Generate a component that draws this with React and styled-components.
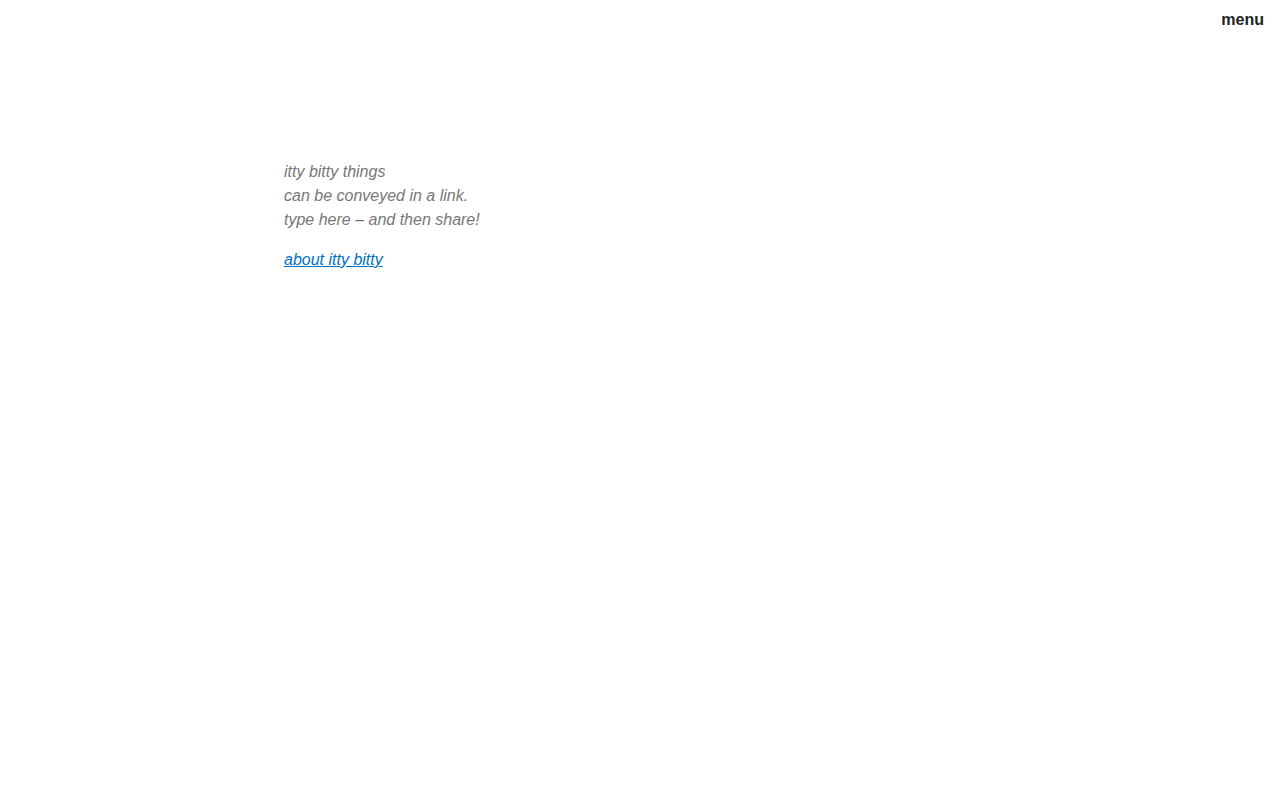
import React from "react";
import styled, { createGlobalStyle } from "styled-components";

const Global = createGlobalStyle`
  html, body { margin: 0; padding: 0; background: #fff; }
  body { font-family: "Liberation Sans", Arial, sans-serif; font-size: 16px; }
`;

const Page = styled.div`
  min-height: 800px;
  display: flex;
  flex-direction: column;
`;

const TopBar = styled.header`
  display: flex;
  justify-content: flex-end;
  padding: 8px 16px 0;
`;

const MenuButton = styled.button`
  border: none;
  background: none;
  padding: 0;
  font-family: "Liberation Sans", Arial, sans-serif;
  font-size: 16px;
  font-weight: bold;
  line-height: 24px;
  color: #222;
  cursor: pointer;
`;

const Content = styled.main`
  width: 712px;
  margin: 0 auto;
  padding-top: 128px;
`;

const Placeholder = styled.div`
  font-style: italic;
  color: #777;
  line-height: 24px;
  font-size: 16px;
`;

const Line = styled.div``;

const AboutLink = styled.a`
  display: inline-block;
  margin-top: 16px;
  font-style: italic;
  color: #0070c9;
  text-decoration: underline;
  line-height: 24px;
  font-size: 16px;
`;

export default function App() {
  return (
    <Page>
      <Global />
      <TopBar>
        <MenuButton>menu</MenuButton>
      </TopBar>
      <Content>
        <Placeholder>
          <Line>itty bitty things</Line>
          <Line>can be conveyed in a link.</Line>
          <Line>type here – and then share!</Line>
        </Placeholder>
        <AboutLink href="#">about itty bitty</AboutLink>
      </Content>
    </Page>
  );
}
